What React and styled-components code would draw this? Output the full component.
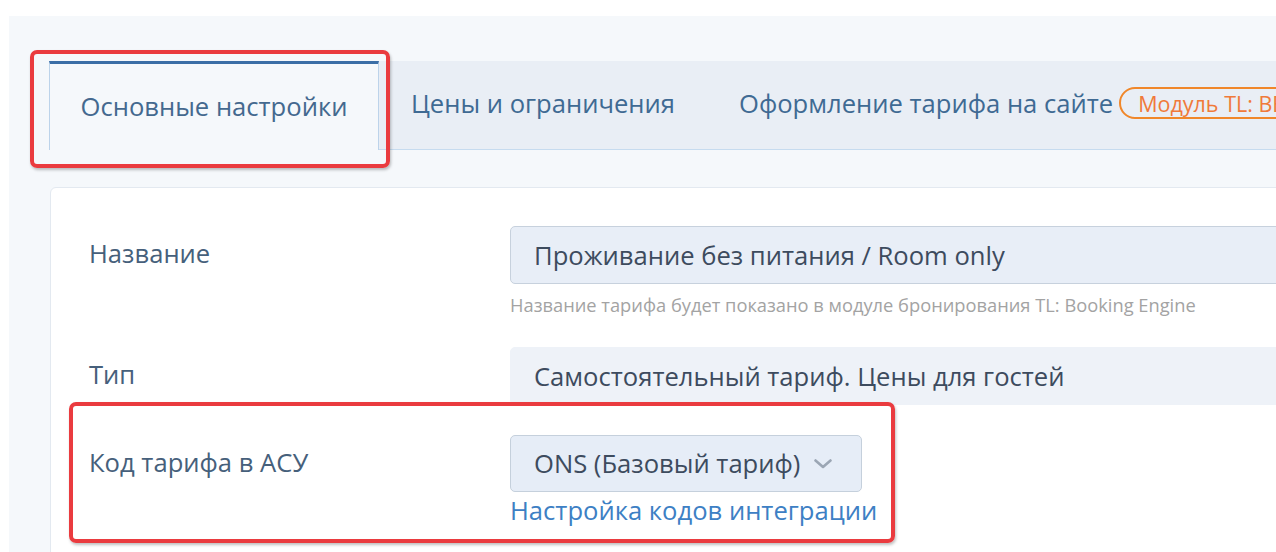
import React from "react";
import styled, { createGlobalStyle } from "styled-components";

const Global = createGlobalStyle`
  html, body { margin: 0; padding: 0; background: #ffffff; overflow: hidden; }
  body { font-family: "Open Sans", "Noto Sans", sans-serif; }
  * { box-sizing: border-box; }
`;

const Page = styled.div`
  position: relative;
  width: 1276px;
  height: 552px;
  overflow: hidden;
  padding: 16px 0 0 9px;
`;

const Panel = styled.div`
  width: 1500px;
  height: 560px;
  background: #f5f8fb;
  padding: 45px 0 0 40px;
`;

const TabBar = styled.div`
  display: flex;
  align-items: stretch;
  height: 89px;
  background: #e9eef5;
  border-bottom: 1px solid #c6dbef;
`;

const Tab = styled.div`
  display: flex;
  align-items: center;
  gap: 6px;
  padding: 0 32px 4px;
  font-size: 25.6px;
  white-space: nowrap;
  color: ${(p) => (p.$active ? "#44698f" : "#3f6a93")};
  ${(p) =>
    p.$active &&
    `
    width: 330px;
    justify-content: center;
    background: #f5f8fb;
    border-top: 3px solid #3b6ea6;
    border-left: 1px solid #bcd3ea;
    border-right: 1px solid #bcd3ea;
    margin-bottom: -1px;
    padding-bottom: 2px;
  `}
`;

const Badge = styled.span`
  display: inline-flex;
  align-items: center;
  height: 32px;
  padding: 0 17px;
  border: 2px solid #f0872a;
  border-radius: 16px;
  font-size: 21.5px;
  color: #f07a3a;
`;

const Card = styled.div`
  margin: 37px 0 0 1px;
  background: #ffffff;
  border: 1px solid #e3e9f0;
  border-radius: 6px;
  padding: 38px 0 40px 38px;
  display: flex;
  flex-direction: column;
`;

const Row = styled.div`
  display: grid;
  grid-template-columns: 421px 1fr;
  margin-top: ${(p) => p.$gap || 0}px;
`;

const Label = styled.div`
  font-size: 25.6px;
  color: #46607b;
  line-height: 56px;
`;

const Field = styled.div`
  display: flex;
  flex-direction: column;
  align-items: flex-start;
`;

const Input = styled.div`
  width: 100%;
  height: 58px;
  display: flex;
  align-items: center;
  padding-left: 23px;
  font-size: 25.6px;
  color: #3d4b5e;
  background: ${(p) => (p.$plain ? "#eef2f8" : "#e8eef7")};
  border: 1px solid ${(p) => (p.$plain ? "#eef2f8" : "#c7d1dd")};
  border-radius: 5px;
  white-space: nowrap;
`;

const Hint = styled.div`
  margin-top: 8px;
  font-size: 18.3px;
  color: #a3a3a3;
  white-space: nowrap;
`;

const Select = styled.div`
  display: flex;
  align-items: center;
  gap: 14px;
  height: 57px;
  width: 352px;
  padding: 0 24px 0 23px;
  font-size: 25.6px;
  color: #3d4b5e;
  background: #e6edf7;
  border: 1px solid #c5d0dc;
  border-radius: 5px;
  white-space: nowrap;
`;

const Link = styled.a`
  margin-top: 1px;
  font-size: 25.6px;
  color: #3d80c4;
  text-decoration: none;
  white-space: nowrap;
`;

const Mark = styled.div`
  position: absolute;
  border: 4px solid #ea3b3f;
  border-radius: 7px;
  box-shadow: 1px 2px 3px rgba(0, 0, 0, 0.25);
  pointer-events: none;
`;

const Chevron = () => (
  <svg width="18" height="10" viewBox="0 0 18 10" fill="none">
    <path d="M1.5 1.5 L9 8 L16.5 1.5" stroke="#9ba6b4" strokeWidth="2.6" strokeLinecap="round" strokeLinejoin="round" />
  </svg>
);

export default function App() {
  return (
    <Page>
      <Global />
      <Panel>
        <TabBar>
          <Tab $active>Основные настройки</Tab>
          <Tab>Цены и ограничения</Tab>
          <Tab>
            Оформление тарифа на сайте
            <Badge>Модуль TL: BE</Badge>
          </Tab>
        </TabBar>
        <Card>
          <Row>
            <Label>Название</Label>
            <Field>
              <Input>Проживание без питания / Room only</Input>
              <Hint>Название тарифа будет показано в модуле бронирования TL: Booking Engine</Hint>
            </Field>
          </Row>
          <Row $gap={30}>
            <Label>Тип</Label>
            <Field>
              <Input $plain>Самостоятельный тариф. Цены для гостей</Input>
            </Field>
          </Row>
          <Row $gap={30}>
            <Label>Код тарифа в АСУ</Label>
            <Field>
              <Select>
                ONS (Базовый тариф)
                <Chevron />
              </Select>
              <Link href="#">Настройка кодов интеграции</Link>
            </Field>
          </Row>
        </Card>
      </Panel>
      <Mark style={{ left: 30, top: 50, width: 360, height: 118 }} />
      <Mark style={{ left: 69, top: 402, width: 826, height: 141 }} />
    </Page>
  );
}
